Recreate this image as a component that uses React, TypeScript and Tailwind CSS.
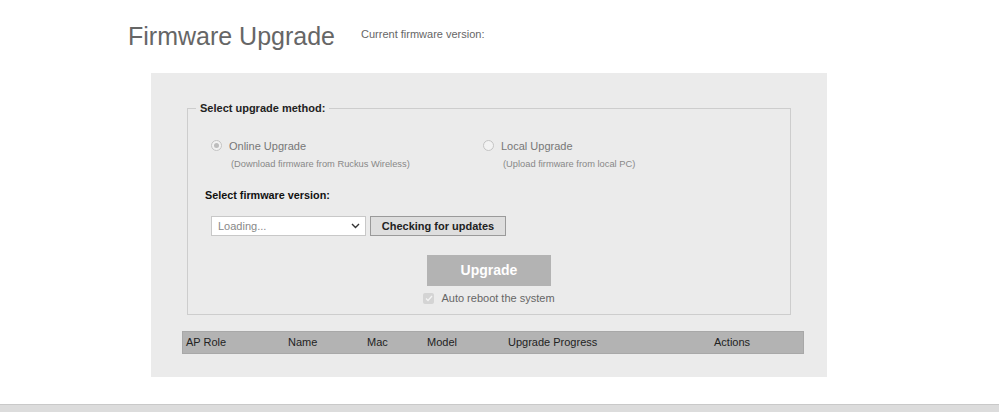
import React from 'react';

const font = { fontFamily: '"Liberation Sans", Arial, sans-serif' };

const Radio: React.FC<{ checked?: boolean }> = ({ checked }) => (
  <span className="flex h-[11px] w-[11px] items-center justify-center rounded-full border border-[#c4c4c4] bg-[#f2f2f2]">
    {checked && <span className="h-[5px] w-[5px] rounded-full bg-[#bdbdbd]" />}
  </span>
);

const columns = ['AP Role', 'Name', 'Mac', 'Model', 'Upgrade Progress', 'Actions'];

export default function App() {
  return (
    <div className="flex h-[412px] w-full flex-col bg-white" style={font}>
      <div className="flex items-start pl-[128px] pt-[21px]">
        <h1 className="text-[25px] leading-[30px] text-[#666]">Firmware Upgrade</h1>
        <span className="ml-[26px] mt-[5px] text-[11px] text-[#666]">Current firmware version:</span>
      </div>

      <div className="ml-[151px] mt-[22px] h-[304px] w-[676px] bg-[#ebebeb] pt-[27px]">
        <fieldset className="mx-[36px] border border-[#cdcdcd] px-[16px] pb-[7px]">
          <legend className="ml-[-8px] px-[4px] text-[11px] font-bold text-[#222]">Select upgrade method:</legend>

          <div className="mt-[21px] flex">
            <div className="w-[279px] pl-[7px]">
              <div className="flex items-center gap-[7px]">
                <Radio checked />
                <span className="text-[11px] text-[#777]">Online Upgrade</span>
              </div>
              <div className="ml-[20px] mt-[4px] text-[9.3px] text-[#888]">(Download firmware from Ruckus Wireless)</div>
            </div>
            <div>
              <div className="flex items-center gap-[7px]">
                <Radio />
                <span className="text-[11px] text-[#777]">Local Upgrade</span>
              </div>
              <div className="ml-[20px] mt-[4px] text-[9.3px] text-[#888]">(Upload firmware from local PC)</div>
            </div>
          </div>

          <div className="ml-[1px] mt-[15px] text-[10.8px] font-bold text-[#111]">Select firmware version:</div>

          <div className="ml-[7px] mt-[13px] flex items-center gap-[4px]">
            <div className="flex h-[20px] w-[155px] items-center justify-between border border-[#c8c8c8] bg-white pl-[6px] pr-[5px]">
              <span className="text-[11px] text-[#888]">Loading...</span>
              <svg width="9" height="6" viewBox="0 0 9 6">
                <path d="M1 1l3.5 3.5L8 1" fill="none" stroke="#333" strokeWidth="1.4" />
              </svg>
            </div>
            <button className="h-[20px] w-[136px] border border-[#9a9a9a] bg-[#dedede] text-[11px] font-bold text-[#222]">
              Checking for updates
            </button>
          </div>

          <div className="mt-[19px] flex flex-col items-center">
            <button className="h-[31px] w-[124px] bg-[#b3b3b3] text-[14px] font-bold text-white">Upgrade</button>
            <div className="mt-[4px] flex items-center gap-[7px]">
              <span className="flex h-[11px] w-[11px] items-center justify-center rounded-[2px] bg-[#d4d4d4]">
                <svg width="8" height="7" viewBox="0 0 8 7">
                  <path d="M1 3.5l2 2L7 1" fill="none" stroke="#f4f4f4" strokeWidth="1.3" />
                </svg>
              </span>
              <span className="text-[11px] text-[#666]">Auto reboot the system</span>
            </div>
          </div>
        </fieldset>

        <div className="ml-[31px] mt-[16px] grid h-[23px] w-[622px] grid-cols-[102px_79px_60px_81px_206px_1fr] items-center border border-[#a8a8a8] bg-[#b3b3b3] pl-[3px] text-[11px] text-[#222]">
          {columns.map((c) => (
            <span key={c}>{c}</span>
          ))}
        </div>
      </div>

      <div className="mt-auto h-[8px] border-t border-[#c9c9c9] bg-[#dcdcdc]" />
    </div>
  );
}
